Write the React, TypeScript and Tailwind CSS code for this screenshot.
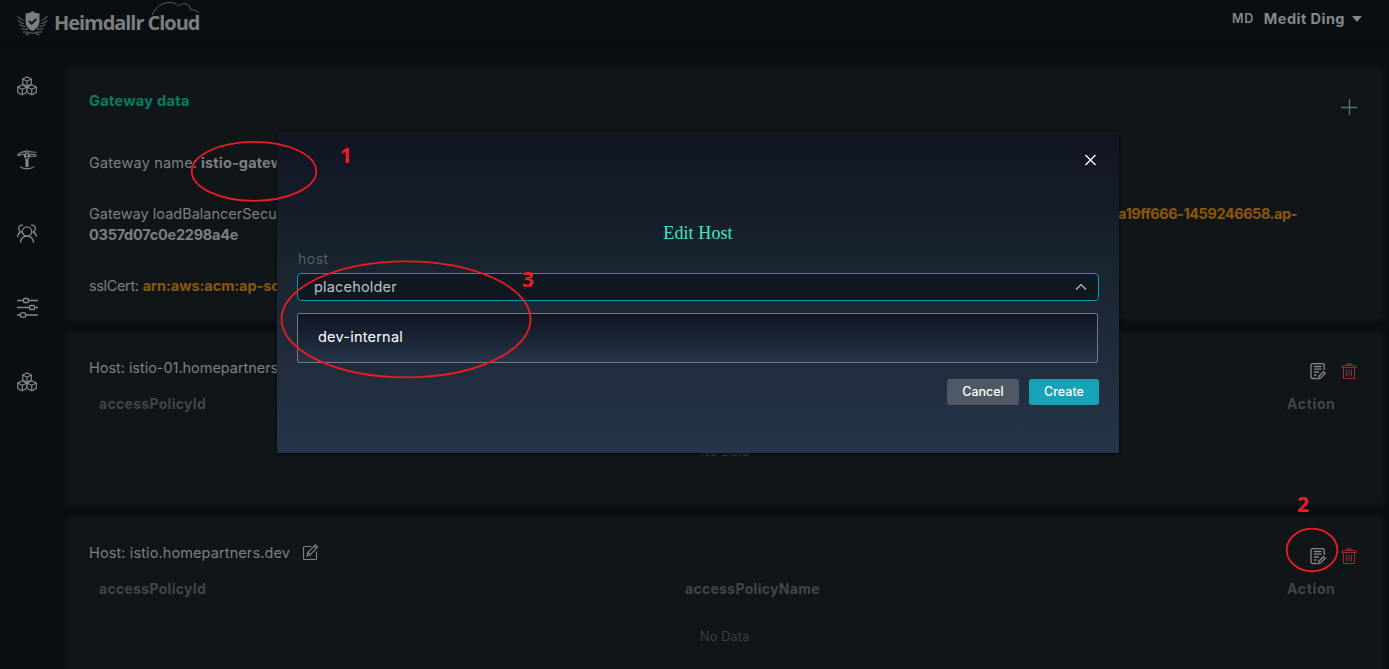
import React from "react";

type IconProps = { className?: string };

function Cubes({ className }: IconProps) {
  return (
    <svg className={className} width="20" height="20" viewBox="0 0 20 20" fill="none" stroke="currentColor" strokeWidth="1.200">
      <path d="M10 .7 14.300 3v5L10 10.300 5.700 8V3ZM5.300 8.800 9.700 11v5.500L5.300 18.900.7 16.500V11ZM14.700 8.800 19.300 11v5.500l-4.600 2.400-4.600-2.400V11Z" />
      <path d="M5.700 3 10 5.200 14.300 3M10 5.200v5M.7 11l4.600 2.300L9.700 11M5.300 13.300v5.400M10.100 11l4.600 2.300 4.600-2.300M14.700 13.300v5.400" />
    </svg>
  );
}

function Gateway() {
  return (
    <svg width="20" height="20" viewBox="0 0 20 20" fill="none" stroke="currentColor" strokeWidth="1.100">
      <path d="M.5 5C3 2.500 5 1.500 8 1.600l2-1 2 1c3 0 5 .8 7.500.6M.5 5.800l7-1.800M12.500 4l7 1M13 6.300h6.500M7.500 4v2.500L9 9v8M12.500 4v2.500L11 9v8M8 3h4M8 6h4M3 16.500c1 2 3.500 1.500 7 2.500 3.500-1 6-.5 7-2.500M10 9v8" />
      <circle cx="10" cy="5" r="1.800" />
    </svg>
  );
}

function Users() {
  return (
    <svg width="20" height="20" viewBox="0 0 20 20" fill="none" stroke="currentColor" strokeWidth="1.300">
      <circle cx="10" cy="7.500" r="4.700" />
      <path d="M3.500 18.800c.3-4 2.800-6.600 6.500-6.600s6.200 2.600 6.500 6.600M6 1.300C3.500.6 1.700 2 1.700 4.300c0 1.700.8 3 2.500 3.700M.5 13c.3-2.600 1.700-4.500 4-5M14 1.300c2.500-.7 4.300.7 4.300 3 0 1.700-.8 3-2.500 3.700M19.500 13c-.3-2.600-1.700-4.500-4-5" />
    </svg>
  );
}

function Sliders() {
  return (
    <svg className="-mb-px -mt-px" width="21" height="22" viewBox="0 0 21 22" fill="none" stroke="currentColor" strokeWidth="1.300">
      <path d="M0 3.500h6.500M11.500 3.500H21M0 10.500h12.500M17.500 10.500H21M0 18h3.500M8.500 18H21" />
      <rect x="6.500" y="1.500" width="5" height="4" rx="1" />
      <rect x="12.500" y="8.500" width="5" height="4" rx="1" />
      <rect x="3.500" y="15.800" width="5" height="4.400" rx="1" />
    </svg>
  );
}

function NotePen() {
  return (
    <svg width="16" height="17" viewBox="0 0 16 17" fill="none" stroke="currentColor" strokeWidth="1.300">
      <path d="M14.200 7V2.500a2 2 0 0 0-2-2H3a2 2 0 0 0-2 2v11a2 2 0 0 0 2 2h4M4 3.500h7.500M4 6.200h7.500M4 9h5M4 12h2.500M8.300 15.700l.6-2.500 4.600-4.500 1.700 1.700-4.600 4.600Z" />
    </svg>
  );
}

function Trash() {
  return (
    <svg width="16" height="17" viewBox="0 0 16 17" fill="none" stroke="currentColor" strokeWidth="1.100">
      <path d="M.8 4.500c0-1.500.8-2 2-2h10.400c1.200 0 2 .5 2 2ZM5.500 2.500l.7-1.600h3.600l.7 1.600M2.500 4.500v11h11v-11M5.500 6.500v7M8 6.500v7M10.500 6.500v7" />
    </svg>
  );
}

function EditSquare() {
  return (
    <svg className="-mt-px" width="17" height="17" viewBox="0 0 17 17" fill="none" stroke="currentColor" strokeWidth="1.100">
      <path d="M9.500 2.500H2.500a1 1 0 0 0-1 1v11a1 1 0 0 0 1 1h11a1 1 0 0 0 1-1V7.500M5 11.800l.8-3.500L13.500.8l2.200 2.200L8.200 10.700ZM12 2.300l2.200 2.200M6 8.500l2 2" />
    </svg>
  );
}

function Logo() {
  return (
    <div className="relative flex h-10 w-[184px] items-center text-[#7b7e80]">
      <svg width="31" height="26" viewBox="0 0 31 26" fill="none" className="ml-px mt-[5px] shrink-0">
        <path d="M15.500 1c2.500 2 5 2.300 7 2.500v8c0 4.500-3 7.500-7 9.500-4-2-7-5-7-9.500v-8c2-.2 4.500-.5 7-2.500Z" fill="#7b7e80" />
        <path d="m12 11 2.700 2.500 4.600-4.500" stroke="#11171b" strokeWidth="2" />
        <path d="M.7 6c1.500 2.500 3 3.500 5.800 4.500M1 10.500c1.800 2 3.500 2.800 6 3.200M2.500 14.500c2 1.600 4 2 6 2M4.500 18.300c2 1 4.500 1.200 6.500.7M30.300 6c-1.500 2.500-3 3.500-5.800 4.500M30 10.500c-1.800 2-3.500 2.800-6 3.200M28.500 14.500c-2 1.600-4 2-6 2M26.500 18.300c-2 1-4.500 1.200-6.500.7M6 22c3 .5 6-.5 9.500 1.500C19 21.500 22 22.500 25 22M8.500 24.500l4-.5M22.500 24.500l-4-.5" stroke="#505659" strokeWidth="1.300" />
      </svg>
      <span className="ml-[6px] mt-[5px] whitespace-nowrap font-['Open_Sans',sans-serif] text-[20px] font-bold leading-6 tracking-[-1.050px]">Heimdallr Cloud</span>
      <svg className="absolute left-[135px] top-[1px]" width="49" height="15" viewBox="0 0 49 15" fill="none" stroke="#555b5e" strokeWidth="1">
        <path d="M1 14C5 6 11 1.500 18 1.500c4 0 7 1 9.500 3.500 5-4.500 12-2 12 4 4-.5 6.500 1 8.500 3" />
      </svg>
    </div>
  );
}

function HostCard({ host, editable }: { host: string; editable?: boolean }) {
  return (
    <section className="h-[167px] shrink-0 bg-[#101518] pl-5 pr-6 pt-[17px] shadow-[0_0_4px_3px_#10181a] last:h-[190px]">
      <div className="flex h-[32px] items-center justify-between">
        <div className="flex items-center gap-[12px] text-[14.500px] text-[#7d8082]">
          <span className={editable ? "tracking-[0.110px]" : "tracking-[-0.040px]"}>{host}</span>
          {editable && <EditSquare />}
        </div>
        <div className="flex items-center gap-[15px] pt-[6px] text-[#85888a]">
          <NotePen />
          <span className="text-[#8a302f]"><Trash /></span>
        </div>
      </div>
      <div className="mt-[5px] flex h-[28px] items-center pl-[10px] text-[14px] font-bold tracking-[0.300px] text-[#424446]">
        <span className="w-[586px]">accessPolicyId</span>
        <span className="w-[602px]">accessPolicyName</span>
        <span className="tracking-[0.650px]">Action</span>
      </div>
      <div className="mt-[25px] pl-[611px] text-[12.500px] leading-5 tracking-[0.280px] text-[#3b3e40]">No Data</div>
    </section>
  );
}

function Modal() {
  return (
    <div className="absolute left-[277px] top-[132px] flex h-[321px] w-[842px] flex-col rounded-[2px] bg-linear-to-b from-[#101522] via-[#1c2633] to-[#26354a] px-5 shadow-[0_1px_3px_#05080c]">
      <button className="mr-[2px] mt-[22px] flex h-3 w-3 items-center justify-center self-end text-white" aria-label="Close">
        <svg width="12" height="12" viewBox="0 0 12 12" stroke="currentColor" strokeWidth="1.300"><path d="m.5 1 10 10M10.500 1 .5 11" /></svg>
      </button>
      <h2 className="mt-[55px] text-center font-['Liberation_Serif',serif] text-[18px] leading-6 tracking-[0.100px] text-[#48e5c2]">Edit Host</h2>
      <label className="mt-[4px] pl-px text-[14px] leading-5 tracking-[0.500px] text-[#555d66]">host</label>
      <div className="mt-[4px] flex h-[28px] items-center justify-between rounded border border-[#0798aa] bg-[#111920] pl-4 pr-[11px] text-[14.500px] tracking-[0.180px] text-[#bbc0c3]">
        <span>placeholder</span>
        <svg width="12" height="8" viewBox="0 0 12 8" fill="none" stroke="currentColor" strokeWidth="1.200"><path d="m1 6.500 5-5 5 5" /></svg>
      </div>
      <div className="mr-px mt-[12px] flex h-[50px] items-center rounded-[2px] border border-[#777b80] bg-linear-to-b from-[#101522] to-[#26354a] pb-[3px] pl-5 text-[14.500px] tracking-[0.220px] text-white">dev-internal</div>
      <div className="mt-4 flex justify-end gap-[10px] text-[12.500px] font-medium text-white">
        <button className="h-[26px] w-[72px] rounded-[3px] bg-[#4e5965]">Cancel</button>
        <button className="h-[26px] w-[70px] rounded-[3px] bg-[#18a2b8]">Create</button>
      </div>
    </div>
  );
}

function Annotations() {
  return (
    <div className="pointer-events-none absolute inset-0 font-['Noto_Sans',sans-serif] text-[21px] font-bold leading-6 text-[#ed1c24]">
      <svg className="absolute inset-0" width="1389" height="669" fill="none" stroke="#ed1c24" strokeWidth="1.800">
        <ellipse cx="254" cy="171.300" rx="62.300" ry="29.500" />
        <ellipse cx="406" cy="319.300" rx="124.500" ry="58" />
        <ellipse cx="1312" cy="550" rx="25.300" ry="21.300" />
      </svg>
      <span className="absolute left-[340px] top-[143px]">1</span>
      <span className="absolute left-[522px] top-[267px]">3</span>
      <span className="absolute left-[1297px] top-[492px]">2</span>
    </div>
  );
}

export default function App() {
  return (
    <div className="relative flex h-[669px] w-[1389px] flex-col overflow-hidden bg-[#090e12] font-['Inter',sans-serif]">
      <header className="flex h-[45px] shrink-0 items-start justify-between pl-[16px] pr-[27px] shadow-[0_1px_3px_#080c10]">
        <Logo />
        <div className="flex h-[38px] items-center text-[#85888a]">
          <span className="mr-[10px] text-[12.500px] font-semibold tracking-[0.600px]">MD</span>
          <span className="text-[14.500px] font-bold tracking-[0.460px]">Medit Ding</span>
          <span className="ml-[7px] border-x-[5px] border-t-[6px] border-x-transparent border-t-[#85888a]" />
        </div>
      </header>
      <div className="flex min-h-0 grow">
        <nav className="flex w-[69px] shrink-0 flex-col gap-[54px] pl-[17px] pt-[31px] text-[#85888a]">
          <Cubes /><Gateway /><Users /><Sliders /><Cubes />
        </nav>
        <main className="flex w-[1312px] flex-col gap-[18px] pt-[25px]">
          <section className="h-[247px] shrink-0 bg-[#101518] pl-5 pr-6 text-[14.500px] text-[#7d8082] shadow-[0_0_4px_3px_#10181a]">
            <div className="flex h-[82px] justify-between pt-[20px]">
              <h1 className="font-bold leading-[22px] tracking-[0.320px] text-[#087c63]">Gateway data</h1>
              <svg className="mt-[9px]" width="16" height="16" stroke="#587477" strokeWidth="1.300"><path d="M8.500 0v16M0 8.500h16" /></svg>
            </div>
            <div className="flex h-[21px] whitespace-nowrap leading-[21px]">
              <span className="w-[112px] tracking-[0.180px]">Gateway name:</span><b className="tracking-[0.150px]">istio-gateway</b>
            </div>
            <div className="mt-[30px] flex whitespace-nowrap leading-[21px]">
              <div className="w-[1029px]">Gateway loadBalancerSecurityGroup:<br /><b className="tracking-[-0.250px]">0357d07c0e2298a4e</b></div>
              <b className="tracking-[-0.450px] text-[#8c5709]">a19ff666-1459246658.ap-</b>
            </div>
            <div className="mt-[30px] flex gap-1 leading-[21px]">
              <span className="tracking-[-0.350px]">sslCert:</span><b className="w-[150px] truncate text-clip tracking-[-0.050px] text-[#8c5709]">arn:aws:acm:ap-so</b>
            </div>
          </section>
          <HostCard host="Host: istio-01.homepartners.dev" />
          <HostCard host="Host: istio.homepartners.dev" editable />
        </main>
      </div>
      <Modal />
      <Annotations />
    </div>
  );
}
